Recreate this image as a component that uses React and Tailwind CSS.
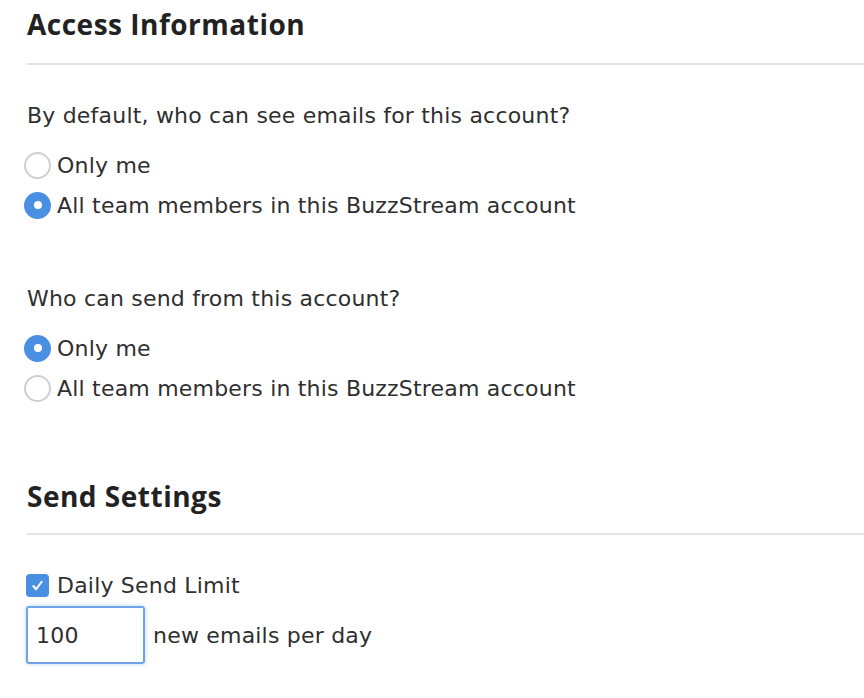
import React from "react";

function Radio({ checked }) {
  if (checked) {
    return (
      <span className="w-[27px] h-[27px] rounded-full bg-[#4a90e2] flex items-center justify-center shrink-0">
        <span className="w-[8px] h-[8px] rounded-full bg-white" />
      </span>
    );
  }
  return <span className="w-[27px] h-[27px] rounded-full border-2 border-[#cfcfcf] bg-white shrink-0" />;
}

function Option({ checked, label }) {
  return (
    <label className="flex items-center gap-[6px] h-[40px]">
      <Radio checked={checked} />
      <span>{label}</span>
    </label>
  );
}

export default function App() {
  return (
    <div className="w-[864px] h-[698px] bg-white overflow-hidden text-[#2f2f2f] text-[22px] tracking-[0.2px] font-['DejaVu_Sans','Open_Sans',sans-serif]">
      <div className="pl-[24px]">
        <h2 className="pl-[3px] pt-[4px] h-[44px] text-[28px] font-bold text-[#222] leading-[40px] tracking-[0.5px] font-['Open_Sans',sans-serif]">Access Information</h2>
        <div className="mt-[19px] ml-[3px] h-[2px] bg-[#e3e3e3]" />

        <p className="pl-[3px] mt-[36px] leading-[30px]">By default, who can see emails for this account?</p>
        <div className="mt-[14px]">
          <Option label="Only me" />
          <Option checked label="All team members in this BuzzStream account" />
        </div>

        <p className="pl-[3px] mt-[59px] leading-[30px]">Who can send from this account?</p>
        <div className="mt-[14px]">
          <Option checked label="Only me" />
          <Option label="All team members in this BuzzStream account" />
        </div>

        <h2 className="pl-[3px] mt-[68px] text-[28px] font-bold text-[#222] leading-[40px] tracking-[0.5px] font-['Open_Sans',sans-serif]">Send Settings</h2>
        <div className="mt-[17px] ml-[3px] h-[2px] bg-[#e3e3e3]" />

        <label className="pl-[2px] mt-[35px] flex items-center gap-[8px] h-[30px]">
          <span className="w-[23px] h-[23px] rounded-[4px] bg-[#4a90e2] flex items-center justify-center">
            <svg viewBox="0 0 16 16" className="w-[15px] h-[15px]" fill="none" stroke="white" strokeWidth="2.2" strokeLinecap="round" strokeLinejoin="round">
              <path d="M3.5 8.5l3 3.5 6-8" />
            </svg>
          </span>
          <span>Daily Send Limit</span>
        </label>
        <div className="pl-[2px] mt-[6px] flex items-center gap-[8px]">
          <div className="w-[119px] h-[58px] border-2 border-[#6fa3e6] rounded-[3px] shadow-[0_0_4px_rgba(74,144,226,0.4)] flex items-center pl-[8px]">
            100
          </div>
          <span>new emails per day</span>
        </div>
      </div>
    </div>
  );
}
